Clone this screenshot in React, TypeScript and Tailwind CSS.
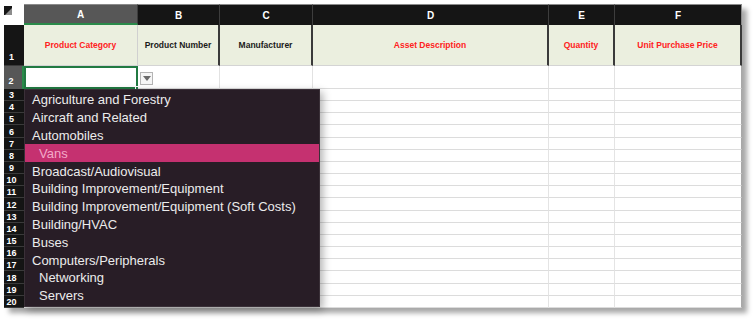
import React from "react";

const columns = [
  { letter: "A", label: "Product Category", red: true },
  { letter: "B", label: "Product Number", red: false },
  { letter: "C", label: "Manufacturer", red: false },
  { letter: "D", label: "Asset Description", red: true },
  { letter: "E", label: "Quantity", red: true },
  { letter: "F", label: "Unit Purchase Price", red: true },
];

const options = [
  { label: "Agriculture and Forestry" },
  { label: "Aircraft and Related" },
  { label: "Automobiles" },
  { label: "Vans", sub: true, active: true },
  { label: "Broadcast/Audiovisual" },
  { label: "Building Improvement/Equipment" },
  { label: "Building Improvement/Equipment (Soft Costs)" },
  { label: "Building/HVAC" },
  { label: "Buses" },
  { label: "Computers/Peripherals" },
  { label: "Networking", sub: true },
  { label: "Servers", sub: true },
];

const bodyRows = Array.from({ length: 18 }, (_, i) => i + 3);

export default function App() {
  return (
    <div className="w-[755px] h-[320px] bg-white p-[4px] font-['Liberation_Sans',Arial,sans-serif]">
      {/* Sheet */}
      <div className="relative w-[738px] shadow-[5px_5px_5px_rgba(0,0,0,0.35)]">
        <div className="grid grid-cols-[20px_114px_82px_93px_236px_66px_127px] grid-rows-[21px_41px_23px_repeat(18,12.17px)]">
          {/* corner */}
          <div className="bg-white">
            <div className="mt-[2px] w-[8px] h-[9px] bg-[#161616] relative overflow-hidden">
              <div className="absolute right-0 bottom-0 w-0 h-0 border-l-[7px] border-l-transparent border-b-[7px] border-b-[#8c8c8c]" />
            </div>
          </div>

          {/* column letters */}
          {columns.map((c, i) => (
            <div
              key={c.letter}
              className={`flex items-center justify-center border-t border-t-[#8a8a8a] border-r border-r-[#3d3d3d] text-[10px] font-bold text-white ${
                i === 0 ? "bg-[#575757] border-b-2 border-b-[#2a8a4a]" : "bg-[#151515]"
              } ${i === 5 ? "border-r-[#8a8a8a]" : ""}`}
            >
              {c.letter}
            </div>
          ))}

          {/* row 1 */}
          <div className="bg-[#151515] border-b border-[#3a3a3a] flex items-end justify-center pr-[5px] pb-[1px] text-[9px] font-bold text-white">
            1
          </div>
          {columns.map((c, i) => (
            <div
              key={c.label}
              className={`bg-[#ebefdf] flex items-center justify-center border-b border-b-[#d4d4d4] text-[8.5px] font-bold ${
                c.red ? "text-[#ff2121]" : "text-[#1a1a1a]"
              } ${i === 0 ? "border-r border-r-[#d0d0d0]" : "border-r-2 border-r-[#3a3a3a]"}`}
            >
              {c.label}
            </div>
          ))}

          {/* row 2 */}
          <div className="bg-[#575757] border-r-2 border-[#2a8a4a] flex items-end justify-center pr-[4px] pb-[1px] text-[9px] font-bold text-white">
            2
          </div>
          {columns.map((c, i) => (
            <div
              key={"r2" + c.letter}
              className={`relative bg-white ${
                i === 0
                  ? "border-2 border-[#217a42]"
                  : `border-b border-b-[#dcdcdc] border-r ${i === 5 ? "border-r-[#a8a8a8]" : "border-r-[#e2e2e2]"}`
              }`}
            >
              {i === 0 && (
                <div className="absolute -right-[4px] -bottom-[4px] w-[5px] h-[5px] bg-[#217a42] border border-white" />
              )}
            </div>
          ))}

          {/* rows 3-20 */}
          {bodyRows.map((n) => (
            <React.Fragment key={n}>
              <div className="bg-[#151515] border-b border-[#3c3c3c] flex items-end justify-center pr-[5px] text-[9px] leading-[10px] font-bold text-white">
                {n}
              </div>
              {columns.map((c, i) => (
                <div
                  key={n + c.letter}
                  className={`bg-white border-b border-b-[#dcdcdc] border-r ${
                    i === 5 ? "border-r-[#a8a8a8]" : "border-r-[#e4e4e4]"
                  }`}
                />
              ))}
            </React.Fragment>
          ))}
        </div>

        {/* validation dropdown button */}
        <div className="absolute left-[136px] top-[68px] w-[13px] h-[13px] bg-[#f5f5f5] border border-[#b4b4b4] flex items-center justify-center">
          <div className="w-0 h-0 border-l-[4px] border-r-[4px] border-t-[5px] border-l-transparent border-r-transparent border-t-[#6a6a6a]" />
        </div>

        {/* dropdown list */}
        <div className="absolute left-[20px] top-[85px] w-[296px] h-[218px] bg-[#281d26] border border-[#3a3038] pt-[1px] shadow-[3px_3px_8px_rgba(0,0,0,0.3)]">
          {options.map((o) => (
            <div
              key={o.label}
              className={`h-[17.8px] flex items-center text-[13px] leading-none ${
                o.sub ? "pl-[14px]" : "pl-[7px]"
              } ${o.active ? "bg-[#c53170] text-[#f3a9c9]" : "text-[#ececec]"}`}
            >
              {o.label}
            </div>
          ))}
        </div>
      </div>
    </div>
  );
}
